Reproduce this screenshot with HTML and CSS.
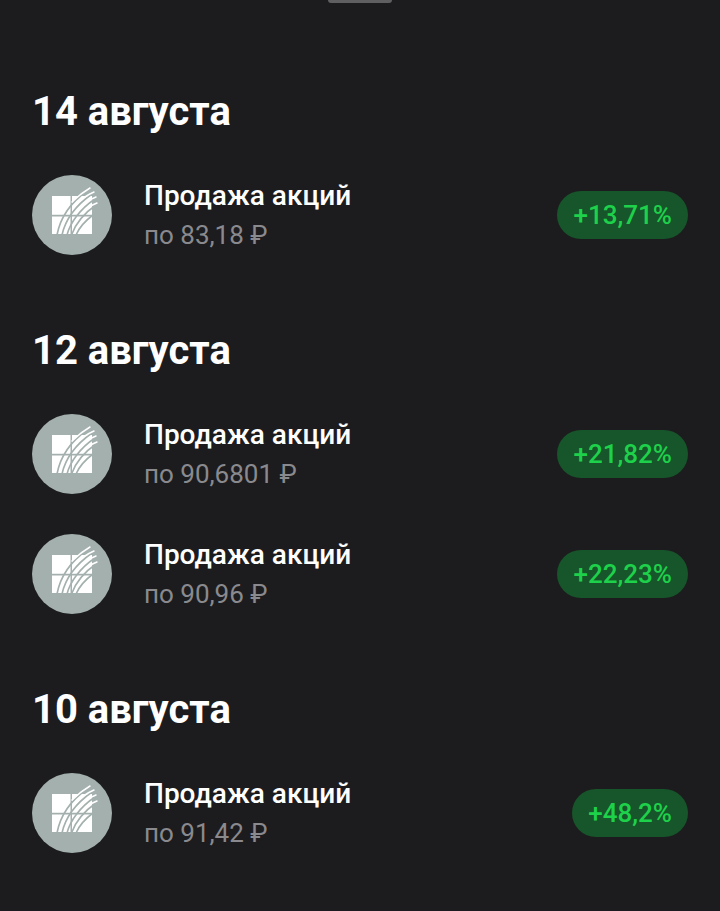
FILE: index.html
```html
<!DOCTYPE html>
<html lang="ru">
<head>
  <meta charset="UTF-8">
  <meta name="viewport" content="width=device-width, initial-scale=1.0">
  <title>Операции</title>
  <link rel="stylesheet" href="styles.css">
</head>
<body>
  <svg class="sprite" aria-hidden="true">
    <symbol id="logo" viewBox="0 0 80 80">
      <circle cx="40" cy="40" r="40" fill="#a3b0ae"/>
      <path fill="#fff" d="M20 21h18.500v18.800h-18.500zM40 21h20v18.800h-20zM20 41.500h18.500v17.500h-18.500zM40 41.500h20v17.500h-20z"/>
      <g fill="none" stroke="#a3b0ae" stroke-width="1.600" stroke-linecap="round">
        <path d="M25 60C28 44 38 28 55 16"/>
        <path d="M30 60C33 46 43 31 60 19"/>
        <path d="M35 60C38 48 48 34 63 24"/>
        <path d="M39.500 60C43 50 51 39 64 30"/>
        <path d="M44 60C47 53 53 46 61 40"/>
      </g>
      <g fill="none" stroke="#fff" stroke-width="1.500" stroke-linecap="round">
        <path d="M40 27C45 22 51 17 58 13"/>
        <path d="M44 30C48 25 55 20 62 17"/>
        <path d="M48 32C53 27 59 24 64 22"/>
        <path d="M52 36C56 32 60 30 65 28"/>
      </g>
    </symbol>
  </svg>

  <div class="handle"></div>

  <section class="day">
    <h2>14 августа</h2>
    <div class="row">
      <svg class="logo"><use href="#logo"/></svg>
      <div class="info">
        <div class="title">Продажа акций</div>
        <div class="price">по 83,18 ₽</div>
      </div>
      <span class="pill">+13,71%</span>
    </div>
  </section>

  <section class="day">
    <h2>12 августа</h2>
    <div class="row">
      <svg class="logo"><use href="#logo"/></svg>
      <div class="info">
        <div class="title">Продажа акций</div>
        <div class="price">по 90,6801 ₽</div>
      </div>
      <span class="pill">+21,82%</span>
    </div>
    <div class="row">
      <svg class="logo"><use href="#logo"/></svg>
      <div class="info">
        <div class="title">Продажа акций</div>
        <div class="price">по 90,96 ₽</div>
      </div>
      <span class="pill">+22,23%</span>
    </div>
  </section>

  <section class="day">
    <h2>10 августа</h2>
    <div class="row">
      <svg class="logo"><use href="#logo"/></svg>
      <div class="info">
        <div class="title">Продажа акций</div>
        <div class="price">по 91,42 ₽</div>
      </div>
      <span class="pill">+48,2%</span>
    </div>
  </section>
</body>
</html>
```

FILE: styles.css
```css
body {
  font-family: 'Roboto', sans-serif;
  margin: 0;
  height: 911px;
  overflow: hidden;
  background-color: #1c1c1e;
  color: #fff;
}

.sprite {
  display: none;
}

.handle {
  width: 64px;
  height: 3px;
  margin: 0 auto;
  background-color: #5f5f62;
  border-radius: 0 0 4px 4px;
}

.day {
  margin-bottom: 53px;
}

.day:first-of-type {
  padding-top: 86px;
}

h2 {
  margin: 0 0 22px 32px;
  padding-top: 1px;
  height: 43px;
  font-size: 40px;
  font-weight: 700;
  line-height: 44px;
}

.row {
  display: flex;
  align-items: center;
  height: 120px;
  padding: 0 32px;
}

.logo {
  width: 80px;
  height: 80px;
  flex-shrink: 0;
}

.info {
  flex: 1;
  margin-left: 32px;
}

.title {
  padding-top: 1px;
  font-size: 28px;
  font-weight: 500;
  line-height: 40px;
}

.price {
  margin-top: -1px;
  font-size: 26px;
  line-height: 40px;
  color: #8a8a8e;
}

.pill {
  padding: 1px 16px 0;
  height: 47px;
  font-size: 26px;
  font-weight: 500;
  line-height: 47px;
  color: #1ed14b;
  background-color: #17552a;
  border-radius: 24px;
}
```
